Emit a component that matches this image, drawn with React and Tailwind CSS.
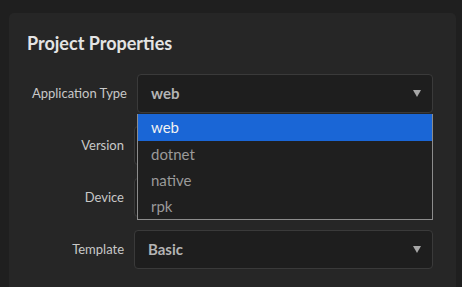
import { useState } from "react";

const options = ["web", "dotnet", "native", "rpk"];

function Arrow() {
  return (
    <svg width="8" height="7" viewBox="0 0 8 7" className="shrink-0">
      <path d="M0 0 H8 L4 7 Z" fill="#a7a7a7" />
    </svg>
  );
}

function SelectBox({ value, open, children }) {
  return (
    <div className="relative flex-1">
      <div className="flex h-[39px] items-center justify-between rounded-[4px] border border-[#3a3a3a] bg-[#1e1e1e] pl-[13px] pr-[11px]">
        <span className="text-[15px] font-bold text-[#b4b4b4]">{value}</span>
        <Arrow />
      </div>
      {open && children}
    </div>
  );
}

function Row({ label, labelWidth, value, open, children }) {
  return (
    <div className="flex items-center gap-[10px]">
      <label
        className="shrink-0 whitespace-nowrap text-right text-[13px] text-[#c8c8c8]"
        style={{ width: labelWidth }}
      >
        {label}
      </label>
      <SelectBox value={value} open={open}>
        {children}
      </SelectBox>
    </div>
  );
}

export default function App() {
  const [selected] = useState("web");

  return (
    <div
      className="h-[287px] w-[462px] overflow-hidden bg-[#1f1f1f] pl-[9px] pt-[13px] pr-[6px]"
      style={{ fontFamily: 'Lato, "Noto Sans", sans-serif' }}
    >
      <div className="h-full rounded-t-[5px] bg-[#262626] pl-[18px] pr-[23px] pt-[18px]">
        <h2 className="mb-[19px] text-[18px] font-bold leading-[24px] text-[#e4e4e4]">
          Project Properties
        </h2>

        <div className="flex flex-col gap-[13px]">
          <Row label="Application Type" labelWidth={100} value={selected} open>
            {/* Dropdown list */}
            <ul className="absolute left-0 right-0 top-[40px] z-10 border border-t-0 border-[#8c8c8c] bg-[#1f1f1f]">
              {options.map((o) => (
                <li
                  key={o}
                  className={
                    o === selected
                      ? "h-[27px] bg-[#1a66d6] pl-[13px] text-[15px] leading-[27px] text-[#f2f2f2]"
                      : "h-[26px] pl-[13px] text-[15px] leading-[26px] text-[#9a9a9a]"
                  }
                >
                  {o}
                </li>
              ))}
            </ul>
          </Row>
          <Row label="Version" labelWidth={97} value="" />
          <Row label="Device" labelWidth={97} value="" />
          <Row label="Template" labelWidth={97} value="Basic" />
        </div>
      </div>
    </div>
  );
}
